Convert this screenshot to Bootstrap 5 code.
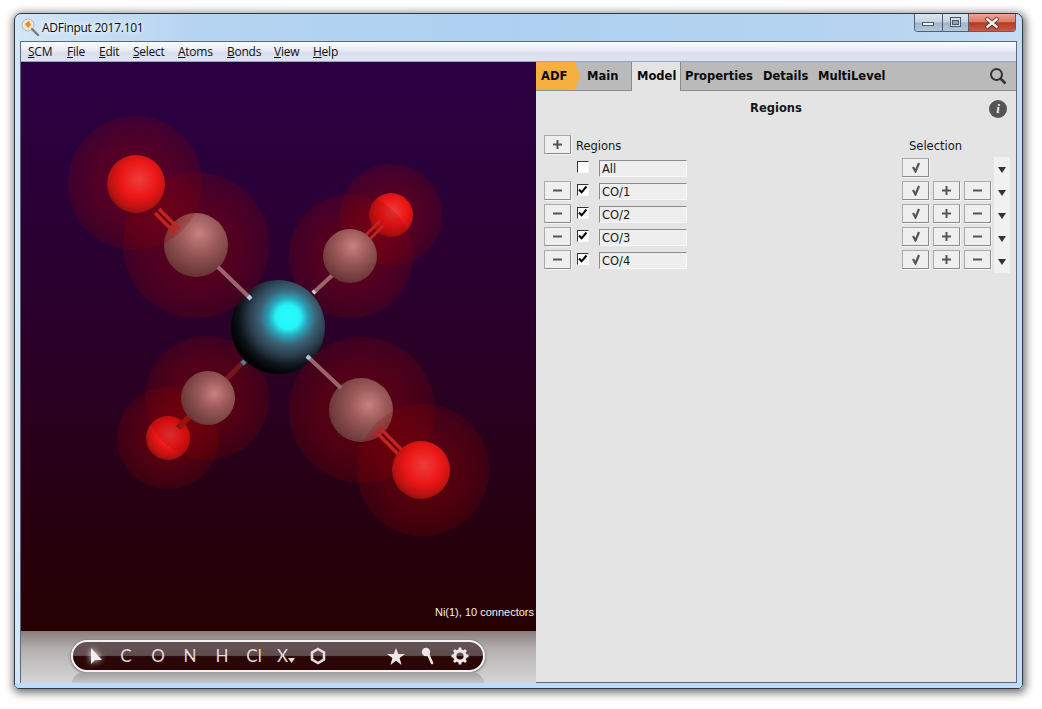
<!DOCTYPE html>
<html lang="en">
<head>
<meta charset="utf-8">
<title>ADFinput 2017.101</title>
<link rel="stylesheet" href="https://cdn.jsdelivr.net/npm/bootstrap@5.3.0/dist/css/bootstrap.min.css">
<style>
html,body{height:100%;overflow:hidden;background:#fff}
.desk{padding:13px 0 0 14px}
.win{width:1009px;height:676px;border:1px solid #2c3a48;border-radius:7px 7px 5px 5px;box-shadow:1px 2px 9px 2px rgba(0,0,0,.55);background:linear-gradient(90deg,#d4e6f7 0,#b5d4f2 18%,#aed0f0 50%,#b6d4f0 85%,#c6dcf3 100%);overflow:hidden}
.chrome-bottom{height:6px;background:#bcdcfa}
.title{height:27px;padding-left:5px;font:12px "Open Sans",sans-serif;color:#0c0c0c;text-shadow:0 0 7px #fff,0 0 7px #fff}
.title span{margin-left:2px;font-size:12px;letter-spacing:-.28px}
.wbtns{height:18px;margin-right:6px;border:1px solid #51606f;border-top:0;border-radius:0 0 4px 4px;overflow:hidden;align-self:flex-start}
.wb{height:17px;display:flex;align-items:center;justify-content:center;background:linear-gradient(#dbe6f0 0,#c5d5e4 48%,#9fb4c8 52%,#b5c8d9 100%)}
.wb.min{width:28px;border-right:1px solid #51606f}
.wb.max{width:26px;border-right:1px solid #51606f}
.wb.close{width:46px;background:linear-gradient(#eda596 0,#d97a68 45%,#b43a26 52%,#c95a45 100%)}
.client{margin:0 5px;border:1px solid #5a6a78;height:642px;background:#e4e4e4}
.menu{height:20px;background:linear-gradient(#fbfcfe 0,#eaedf7 40%,#d9deee 60%,#e0e4f2 100%);border-bottom:1px solid #9aa4bc;font:12px "Open Sans",sans-serif;color:#101010;padding-left:7px;line-height:20px}
.menu span{display:block;letter-spacing:-.25px}
.m1{width:39px}.m2{width:32px}.m3{width:34px}.m4{width:45px}.m5{width:49px}.m6{width:47px}.m7{width:39px}
.main{height:621px}
.left{width:515px;height:621px;flex:none}
.canvas{height:569px;position:relative}
.canvas svg{display:block}
.status{position:absolute;right:2px;bottom:13px;font:11px "Liberation Sans",sans-serif;color:#f2f2f2}
.dock{height:52px;background:linear-gradient(#8a7d7d 0,#b5b0b0 35%,#d6d6d6 100%);padding:9px 51px 0 50px;overflow:hidden}
.pill{height:32px;border:2px solid #f4f2f2;border-radius:16px;background:linear-gradient(#655252 0,#5f4c4c 48%,#2a0606 52%,#2a0606 100%);box-shadow:0 1px 3px rgba(0,0,0,.5);padding-left:5px;padding-right:7px;font:17px "Lato","Open Sans",sans-serif;color:#e2dcdc}
.tool{width:32px;text-align:center;line-height:28px;height:28px;display:flex;align-items:center;justify-content:center;position:relative}
.cursor{margin-left:4px}
.glow{filter:drop-shadow(0 0 3px #fff)}
.refl{height:14px;border-radius:16px 16px 0 0;background:linear-gradient(#a09c9c,#d2d2d2)}
.right{width:480px;flex:none;font:11.5px "DejaVu Sans",sans-serif;color:#161616}
.tabs{height:29px;background:#bababa;border-bottom:1px solid #8a8a8a;font-weight:700;font-size:11.5px;line-height:28px;color:#0a0a0a}
.adf{width:44px;height:28px;background:#f7b040;clip-path:polygon(0 0,39px 0,44px 50%,39px 100%,0 100%);padding-left:5px}
.tmain{width:52px;padding-left:7px;border-right:1px solid #8a8a8a;height:28px}
.tmodel{width:49px;height:29px;background:#e4e4e4;padding-left:5px;border-right:1px solid #8a8a8a;margin-bottom:-1px;position:relative}
.tp{margin-left:4px;width:73px}.td{width:55px;margin-left:5px}
.srch{padding-right:9px}
.ttl{height:44px;font-weight:700;font-size:11.5px;position:relative;text-align:center;line-height:35px}
.info{position:absolute;right:9px;top:9px;width:18px;height:18px;border-radius:50%;background:#555;color:#eee;font:italic 700 13px/18px "Liberation Serif",serif}
.hdr{height:23px;padding-left:8px}
.hdr-l{padding:4px 0 0 5px}
.rows{padding-left:8px}
.row-x{height:23px}
.b{width:27px;height:19px;padding:0;border:1px solid;border-color:#ababab #8a8a8a #8a8a8a #ababab;border-radius:1px;background:#efefef;box-shadow:1px 1px 0 #f6f6f6;display:flex;align-items:center;justify-content:center;--bs-btn-hover-bg:#efefef;--bs-btn-hover-border-color:#8a8a8a}
.ph{width:27px}
.chk{width:12px;height:12px;margin:3px 10px 0 6px;flex:none;border-radius:0!important;border:1px solid;border-color:#333 #f8f8f8 #f8f8f8 #333;background-color:#fff;box-shadow:none!important;float:none}
.chk:checked{background-color:#fff;border-color:#333 #f8f8f8 #f8f8f8 #333;background-size:10px 10px;background-image:url("data:image/svg+xml,%3csvg xmlns='http://www.w3.org/2000/svg' viewBox='0 0 10 10'%3e%3cpath fill='none' stroke='%23000' stroke-width='2' d='M1 4.5l2.6 2.8L8.5 1.5'/%3e%3c/svg%3e")}
.nm{width:88px;height:17px;margin-top:2px;padding:1px 0 0 2px;border:1px solid;border-color:#8c8c8c #f8f8f8 #f8f8f8 #8c8c8c;border-radius:0;background:#eeeeee;font:11.5px "DejaVu Sans",sans-serif;color:#161616;box-shadow:none!important;min-height:0}
.acts{gap:4px}
.drop{width:16px;margin:-1px 6px 0 3px;height:116px;background:#f1f1f1;padding-top:1px}
.drop div{height:23px;display:flex;align-items:center;justify-content:center}
.lbl-sel{width:90px;padding-top:4px;margin-right:17px}
</style>
</head>
<body>
<div class="desk">
 <div class="win d-flex flex-column">
  <div class="title d-flex align-items-center flex-shrink-0">
   <svg width="20" height="20" viewBox="0 0 20 20"><circle cx="8" cy="7" r="6" fill="#efe6da" stroke="#b5b5b5"/><path d="M5 6l4-3 2 4-3 3z" fill="#f0851e"/><path d="M12 11l6 6" stroke="#777" stroke-width="2.4" stroke-linecap="round"/></svg>
   <span>ADFinput 2017.101</span>
   <div class="wbtns d-flex ms-auto">
    <div class="wb min"><svg width="14" height="8"><rect x=".5" y="3.5" width="11" height="3" fill="#eef2f6" stroke="#49596a"/></svg></div>
    <div class="wb max"><svg width="12" height="11"><rect x=".5" y=".5" width="10" height="9" fill="#cfdbe6" stroke="#49596a"/><rect x="2.5" y="3.5" width="6" height="4" fill="#8fa3b7" stroke="#49596a"/></svg></div>
    <div class="wb close"><svg width="16" height="12"><path d="M2 1l12 10M14 1L2 11" stroke="#4a2a26" stroke-width="4"/><path d="M2.5 1.5l11 9M13.5 1.5l-11 9" stroke="#f6f0ee" stroke-width="2.4"/></svg></div>
   </div>
  </div>
  <div class="client flex-shrink-0">
   <div class="menu d-flex">
    <span class="m1"><u>S</u>CM</span><span class="m2"><u>F</u>ile</span><span class="m3"><u>E</u>dit</span><span class="m4"><u>S</u>elect</span><span class="m5"><u>A</u>toms</span><span class="m6"><u>B</u>onds</span><span class="m7"><u>V</u>iew</span><span><u>H</u>elp</span>
   </div>
   <div class="main d-flex">
    <div class="left d-flex flex-column">
     <div class="canvas">
      <svg width="515" height="569" viewBox="21 62 515 569" xmlns="http://www.w3.org/2000/svg">
       <defs>
        <linearGradient id="bg" x1="0" y1="0" x2="0" y2="1"><stop offset="0" stop-color="#2a0044"/><stop offset=".5" stop-color="#2a0028"/><stop offset="1" stop-color="#250000"/></linearGradient>
        <radialGradient id="halo"><stop offset="0" stop-color="#b00000" stop-opacity=".4"/><stop offset=".6" stop-color="#a00000" stop-opacity=".33"/><stop offset="1" stop-color="#900000" stop-opacity=".2"/></radialGradient>
        <radialGradient id="cs" cx=".62" cy=".42" r=".72"><stop offset="0" stop-color="#c98080"/><stop offset=".4" stop-color="#9a5858"/><stop offset="1" stop-color="#5c2e2e"/></radialGradient>
        <radialGradient id="cu" cx=".55" cy=".32" r=".78"><stop offset="0" stop-color="#c98080"/><stop offset=".4" stop-color="#9a5858"/><stop offset="1" stop-color="#562a2a"/></radialGradient>
        <radialGradient id="os" cx=".55" cy=".42" r=".64"><stop offset="0" stop-color="#ee3c3c"/><stop offset=".5" stop-color="#ec1616"/><stop offset=".8" stop-color="#b81212"/><stop offset="1" stop-color="#701010"/></radialGradient>
        <radialGradient id="ni" gradientUnits="userSpaceOnUse" cx="288" cy="317" r="66"><stop offset="0" stop-color="#26ffff"/><stop offset=".18" stop-color="#26f4fa"/><stop offset=".3" stop-color="#2b9fb5"/><stop offset=".42" stop-color="#3b6478"/><stop offset=".58" stop-color="#2c3e4e"/><stop offset=".74" stop-color="#0e141a"/><stop offset=".88" stop-color="#000"/></radialGradient>
       </defs>
       <rect x="21" y="62" width="515" height="569" fill="url(#bg)"/>
       <!-- lower left CO, behind the metal -->
       <circle cx="168" cy="438" r="51" fill="url(#halo)"/>
       <circle cx="168" cy="438" r="22" fill="url(#os)"/>
       <path d="M178 428l16-16" stroke="#8a1c1c" stroke-width="6"/>
       <path d="M243 362l-21 22" stroke="#5e2028" stroke-width="5"/>
       <circle cx="207" cy="398" r="62" fill="url(#halo)"/>
       <circle cx="208" cy="398" r="27" fill="url(#cs)"/>
       <!-- upper right CO -->
       <circle cx="391" cy="215" r="51" fill="url(#halo)"/>
       <circle cx="391" cy="215" r="22" fill="url(#os)"/>
       <circle cx="351" cy="256" r="62" fill="url(#halo)"/>
       <path d="M384 225l-18 18M380 221l-18 18" stroke="#c02420" stroke-width="3"/>
       <path d="M313 293l25-23" stroke="#9a666c" stroke-width="4"/>
       <circle cx="350" cy="256" r="27" fill="url(#cu)"/>
       <!-- metal centre -->
       <circle cx="278" cy="327" r="47" fill="url(#ni)"/>
       <path d="M242 364l3-3" stroke="#4f7f94" stroke-width="5"/>
       <path d="M313 293l2-2" stroke="#c8d4e0" stroke-width="4"/>
       <!-- upper left CO -->
       <circle cx="196" cy="245" r="73" fill="url(#halo)"/>
       <circle cx="196" cy="245" r="32" fill="url(#cu)"/>
       <circle cx="135" cy="183" r="67" fill="url(#halo)"/>
       <path d="M159 209l20 20M155 213l20 20" stroke="#c02420" stroke-width="3.4"/>
       <circle cx="136" cy="184" r="29" fill="url(#os)"/>
       <path d="M218 267l33 32" stroke="#9a666c" stroke-width="4"/>
       <path d="M248 296l3 3" stroke="#c0c4dc" stroke-width="4"/>
       <!-- lower right CO -->
       <circle cx="362" cy="410" r="73" fill="url(#halo)"/>
       <circle cx="361" cy="410" r="32" fill="url(#cs)"/>
       <circle cx="423" cy="470" r="66" fill="url(#halo)"/>
       <path d="M380 428l22 22M376 432l22 22" stroke="#c02420" stroke-width="3.4"/>
       <circle cx="421" cy="470" r="29" fill="url(#os)"/>
       <path d="M307 356l34 32" stroke="#9a666c" stroke-width="4"/>
       <path d="M307 356l3 3" stroke="#b0b8d4" stroke-width="4"/>
      </svg>
      <div class="status">Ni(1), 10 connectors</div>
     </div>
     <div class="dock flex-shrink-0">
      <div class="pill d-flex align-items-center">
       <div class="tool"><svg class="glow cursor" width="14" height="17" viewBox="0 0 14 17"><path d="M2 0v16l4-4 1 0h6z" fill="#f4f0f0"/></svg></div>
       <div class="tool">C</div><div class="tool">O</div><div class="tool">N</div><div class="tool">H</div><div class="tool">Cl</div>
       <div class="tool">X<svg width="7" height="5" viewBox="0 0 7 5" class="mt-2"><path d="M0 0h7L3.500 5z" fill="#e2dcdc"/></svg></div>
       <div class="tool"><svg width="16" height="18" viewBox="0 0 16 18"><path d="M8 2l6 3.500v7L8 16l-6-3.500v-7z" fill="none" stroke="#e2dcdc" stroke-width="2.6"/></svg></div>
       <div class="tool ms-auto"><svg width="18" height="17" viewBox="0 0 18 17"><path d="M9 0l2.300 6H18l-5.400 4 2 7L9 12.800 3.400 17l2-7L0 6h6.700z" fill="#ece6e6"/></svg></div>
       <div class="tool"><svg width="14" height="18" viewBox="0 0 14 18"><circle cx="5" cy="5" r="4.200" fill="#ece6e6"/><path d="M7 7l4 9" stroke="#ece6e6" stroke-width="2.6" stroke-linecap="round"/></svg></div>
       <div class="tool"><svg width="18" height="18" viewBox="0 0 18 18"><circle cx="9" cy="9" r="5.200" fill="none" stroke="#ece6e6" stroke-width="3.2"/><path d="M9 .5v3M9 14.500v3M.5 9h3M14.500 9h3M3 3l2.200 2.200M12.800 12.800L15 15M15 3l-2.200 2.200M5.200 12.800L3 15" stroke="#ece6e6" stroke-width="2.8"/></svg></div>
      </div>
      <div class="refl"></div>
     </div>
    </div>
    <div class="right">
     <div class="tabs d-flex">
      <div class="adf">ADF</div><div class="tmain">Main</div><div class="tmodel">Model</div><div class="tp">Properties</div><div class="td">Details</div><div>MultiLevel</div>
      <div class="ms-auto srch d-flex align-items-center"><svg width="18" height="18" viewBox="0 0 18 18"><circle cx="7.500" cy="7.500" r="5.500" fill="none" stroke="#333" stroke-width="2"/><path d="M11.500 11.500l5 5" stroke="#333" stroke-width="2.600"/></svg></div>
     </div>
     <div class="ttl">Regions<div class="info">i</div></div>
     <div class="hdr d-flex align-items-start">
      <button class="btn b" type="button"><svg width="9" height="9"><path d="M4.500 0v9M0 4.500h9" stroke="#555" stroke-width="2"/></svg></button>
      <div class="hdr-l">Regions</div>
      <div class="ms-auto lbl-sel">Selection</div>
     </div>
     <div class="d-flex rows">
      <div class="flex-grow-1">
       <div class="row-x d-flex align-items-start">
        <div class="ph"></div><input class="form-check-input chk" type="checkbox"><input class="form-control nm" value="All">
        <div class="ms-auto acts d-flex"><button class="btn b" type="button"><svg width="10" height="11" viewBox="0 0 10 11"><path d="M2 5l2.500 4.500L8 1" fill="none" stroke="#555" stroke-width="2.200"/></svg></button><div class="ph"></div><div class="ph"></div></div>
       </div>
       <div class="row-x d-flex align-items-start">
        <button class="btn b" type="button"><svg width="9" height="9"><path d="M0 4.500h9" stroke="#555" stroke-width="2"/></svg></button><input class="form-check-input chk" type="checkbox" checked><input class="form-control nm" value="CO/1">
        <div class="ms-auto acts d-flex"><button class="btn b" type="button"><svg width="10" height="11" viewBox="0 0 10 11"><path d="M2 5l2.500 4.500L8 1" fill="none" stroke="#555" stroke-width="2.200"/></svg></button><button class="btn b" type="button"><svg width="9" height="9"><path d="M4.500 0v9M0 4.500h9" stroke="#555" stroke-width="2"/></svg></button><button class="btn b" type="button"><svg width="9" height="9"><path d="M0 4.500h9" stroke="#555" stroke-width="2"/></svg></button></div>
       </div>
       <div class="row-x d-flex align-items-start">
        <button class="btn b" type="button"><svg width="9" height="9"><path d="M0 4.500h9" stroke="#555" stroke-width="2"/></svg></button><input class="form-check-input chk" type="checkbox" checked><input class="form-control nm" value="CO/2">
        <div class="ms-auto acts d-flex"><button class="btn b" type="button"><svg width="10" height="11" viewBox="0 0 10 11"><path d="M2 5l2.500 4.500L8 1" fill="none" stroke="#555" stroke-width="2.200"/></svg></button><button class="btn b" type="button"><svg width="9" height="9"><path d="M4.500 0v9M0 4.500h9" stroke="#555" stroke-width="2"/></svg></button><button class="btn b" type="button"><svg width="9" height="9"><path d="M0 4.500h9" stroke="#555" stroke-width="2"/></svg></button></div>
       </div>
       <div class="row-x d-flex align-items-start">
        <button class="btn b" type="button"><svg width="9" height="9"><path d="M0 4.500h9" stroke="#555" stroke-width="2"/></svg></button><input class="form-check-input chk" type="checkbox" checked><input class="form-control nm" value="CO/3">
        <div class="ms-auto acts d-flex"><button class="btn b" type="button"><svg width="10" height="11" viewBox="0 0 10 11"><path d="M2 5l2.500 4.500L8 1" fill="none" stroke="#555" stroke-width="2.200"/></svg></button><button class="btn b" type="button"><svg width="9" height="9"><path d="M4.500 0v9M0 4.500h9" stroke="#555" stroke-width="2"/></svg></button><button class="btn b" type="button"><svg width="9" height="9"><path d="M0 4.500h9" stroke="#555" stroke-width="2"/></svg></button></div>
       </div>
       <div class="row-x d-flex align-items-start">
        <button class="btn b" type="button"><svg width="9" height="9"><path d="M0 4.500h9" stroke="#555" stroke-width="2"/></svg></button><input class="form-check-input chk" type="checkbox" checked><input class="form-control nm" value="CO/4">
        <div class="ms-auto acts d-flex"><button class="btn b" type="button"><svg width="10" height="11" viewBox="0 0 10 11"><path d="M2 5l2.500 4.500L8 1" fill="none" stroke="#555" stroke-width="2.200"/></svg></button><button class="btn b" type="button"><svg width="9" height="9"><path d="M4.500 0v9M0 4.500h9" stroke="#555" stroke-width="2"/></svg></button><button class="btn b" type="button"><svg width="9" height="9"><path d="M0 4.500h9" stroke="#555" stroke-width="2"/></svg></button></div>
       </div>
      </div>
      <div class="drop flex-shrink-0">
       <div><svg width="8" height="6"><path d="M0 0h8L4 6z" fill="#333"/></svg></div>
       <div><svg width="8" height="6"><path d="M0 0h8L4 6z" fill="#333"/></svg></div>
       <div><svg width="8" height="6"><path d="M0 0h8L4 6z" fill="#333"/></svg></div>
       <div><svg width="8" height="6"><path d="M0 0h8L4 6z" fill="#333"/></svg></div>
       <div><svg width="8" height="6"><path d="M0 0h8L4 6z" fill="#333"/></svg></div>
      </div>
     </div>
    </div>
   </div>
  </div>
  <div class="chrome-bottom flex-shrink-0"></div>
 </div>
</div>
<script src="https://cdn.jsdelivr.net/npm/bootstrap@5.3.0/dist/js/bootstrap.bundle.min.js"></script>
</body>
</html>
